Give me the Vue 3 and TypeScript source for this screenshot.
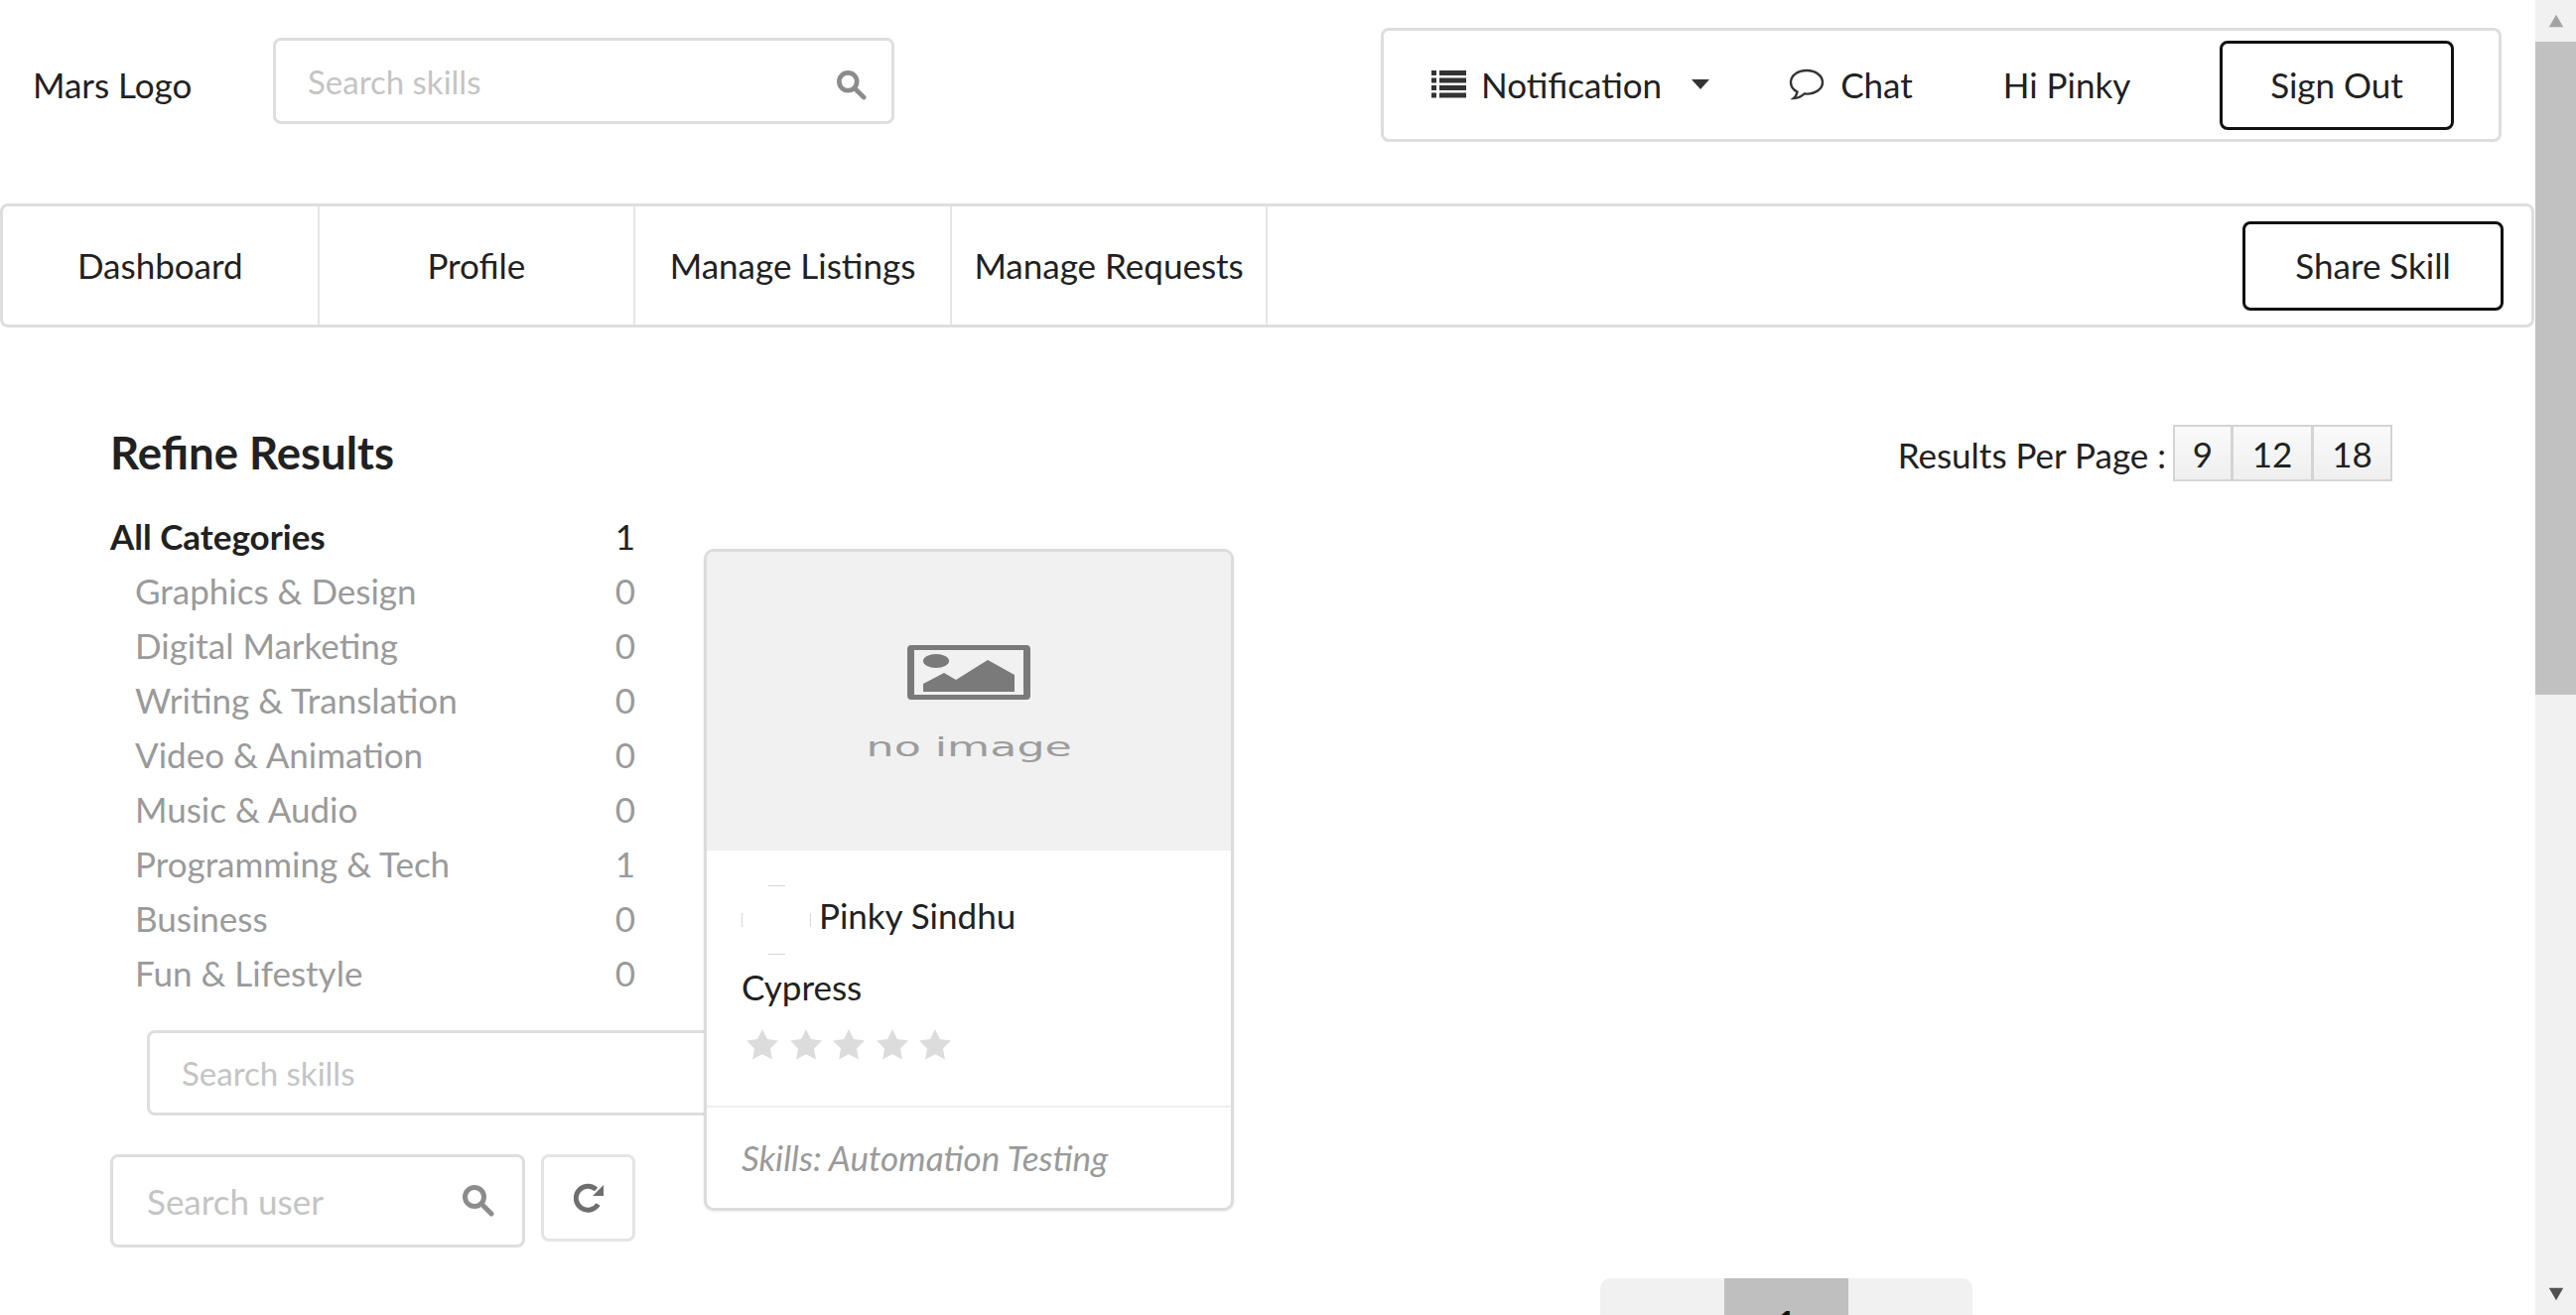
<script setup lang="ts">
interface Category {
  name: string
  count: number
}

const navItems = ['Dashboard', 'Profile', 'Manage Listings', 'Manage Requests']
const pageSizes = [9, 12, 18]
const categories: Category[] = [
  { name: 'Graphics & Design', count: 0 },
  { name: 'Digital Marketing', count: 0 },
  { name: 'Writing & Translation', count: 0 },
  { name: 'Video & Animation', count: 0 },
  { name: 'Music & Audio', count: 0 },
  { name: 'Programming & Tech', count: 1 },
  { name: 'Business', count: 0 },
  { name: 'Fun & Lifestyle', count: 0 },
]
</script>

<template>
  <div class="page">
    <main class="main">
      <header class="top">
        <span class="logo">Mars Logo</span>
        <div class="search top-search">
          <input type="text" placeholder="Search skills">
          <svg class="search-icon" viewBox="0 0 32 32"><circle cx="12" cy="12" r="9.500" fill="none" stroke="#8c8c8c" stroke-width="5" /><path d="M20 20l9 9" stroke="#8c8c8c" stroke-width="5" stroke-linecap="round" /></svg>
        </div>
        <div class="user-menu">
          <span class="menu-item notif">
            <svg class="list-icon" viewBox="0 0 35 28"><path d="M0 0h5v5H0zM8 0h27v5H8zM0 7.500h5v5H0zM8 7.500h27v5H8zM0 15h5v5H0zM8 15h27v5H8zM0 22.500h5v5H0zM8 22.500h27v5H8z" fill="#333" /></svg>
            Notification
            <svg class="caret" viewBox="0 0 18 10"><path d="M0 0h18L9 10z" fill="#333" /></svg>
          </span>
          <span class="menu-item chat">
            <svg class="chat-icon" viewBox="0 0 36 32"><path d="M18 2C9 2 2 7 2 14c0 4 2.500 7.500 6.500 9.500C8 26 7 28.500 5 30c4 0 8-2 10.500-4.500.8.100 1.700.1 2.500.1 9 0 16-5 16-11.600S27 2 18 2z" fill="none" stroke="#333" stroke-width="2.400" /></svg>
            Chat
          </span>
          <span class="menu-item greet">Hi Pinky</span>
          <button class="black-btn sign-out">Sign Out</button>
        </div>
      </header>

      <nav class="nav">
        <a v-for="item in navItems" :key="item" class="nav-item">{{ item }}</a>
        <button class="black-btn share">Share Skill</button>
      </nav>

      <section class="content">
        <aside class="sidebar">
          <h3 class="refine">Refine Results</h3>
          <div class="cat-row cat-all"><span>All Categories</span><span class="count">1</span></div>
          <div v-for="cat in categories" :key="cat.name" class="cat-row cat-sub">
            <span>{{ cat.name }}</span><span class="count">{{ cat.count }}</span>
          </div>
          <input class="skill-filter" type="text" placeholder="Search skills">
          <div class="user-filter">
            <div class="search user-search">
              <input type="text" placeholder="Search user">
              <svg class="search-icon" viewBox="0 0 32 32"><circle cx="12" cy="12" r="9.500" fill="none" stroke="#8c8c8c" stroke-width="5" /><path d="M20 20l9 9" stroke="#8c8c8c" stroke-width="5" stroke-linecap="round" /></svg>
            </div>
            <button class="refresh">
              <svg viewBox="0 0 30 30" width="30" height="30"><path d="M24.500 21.500A12 12 0 1 1 22.500 6.500" fill="none" stroke="#6e6e6e" stroke-width="5" /><path d="M30 2v11H19z" fill="#6e6e6e" /></svg>
            </button>
          </div>
        </aside>

        <div class="results">
          <div class="per-page">
            <span class="per-label">Results Per Page :</span>
            <button v-for="size in pageSizes" :key="size" class="size-btn">{{ size }}</button>
          </div>
          <article class="card">
            <div class="thumb">
              <svg class="thumb-icon" viewBox="0 0 124 55">
                <path fill-rule="evenodd" d="M4 0h116a4 4 0 0 1 4 4v47a4 4 0 0 1-4 4H4a4 4 0 0 1-4-4V4a4 4 0 0 1 4-4zM7 5v45h110V5z" fill="#7a7a7a" />
                <ellipse cx="29" cy="16" rx="13" ry="7" fill="#7a7a7a" />
                <path d="M16 47v-8l21-11 12 7 32-20 27 15v17z" fill="#7a7a7a" />
              </svg>
              <span class="no-image">no image</span>
            </div>
            <div class="card-body">
              <div class="owner">
                <svg class="avatar" viewBox="0 0 70 70">
                  <path d="M27 .5h17M27 69.500h17M.5 28v14M69.500 28v14" stroke="#d6d6d6" stroke-width="1" fill="none" />
                </svg>
                <span class="owner-name">Pinky Sindhu</span>
              </div>
              <div class="title">Cypress</div>
              <div class="stars">
                <svg v-for="n in 5" :key="n" viewBox="0 0 32 31" class="star"><path d="M16 0l4.900 10.100 11.100 1.500-8 7.800 1.900 11-9.900-5.200-9.900 5.200 1.900-11-8-7.800 11.100-1.500z" fill="#dcdcdc" /></svg>
              </div>
            </div>
            <div class="card-foot">Skills: Automation Testing</div>
          </article>
          <div class="pager">
            <span class="pg"></span>
            <span class="pg pg-active">1</span>
            <span class="pg"></span>
          </div>
        </div>
      </section>
    </main>

    <div class="scrollbar">
      <div class="arrow-box"><svg viewBox="0 0 20 20" width="18" height="18"><path d="M10 3l8 14H2z" fill="#a3a3a3" /></svg></div>
      <div class="track"><div class="thumb-bar"></div></div>
      <div class="arrow-box"><svg viewBox="0 0 20 20" width="18" height="18"><path d="M2 3h16l-8 14z" fill="#505050" /></svg></div>
    </div>
  </div>
</template>

<style scoped>
.page {
  display: flex;
  height: 100vh;
  overflow: hidden;
  font-family: Lato, "Open Sans", sans-serif;
  font-size: 35px;
  color: #212121;
  background: #fff;
}

.main {
  flex: 1;
  min-width: 0;
  overflow: hidden;
}

.top {
  display: flex;
  align-items: flex-start;
  height: 205px;
  padding: 28px 34px 0 33px;
  box-sizing: border-box;
}

.logo {
  width: 242px;
  line-height: 115px;
  flex-shrink: 0;
}

.search {
  display: flex;
  align-items: center;
  border: 3px solid #dedede;
  border-radius: 8px;
  box-sizing: border-box;
}

.search input {
  flex: 1;
  min-width: 0;
  border: 0;
  outline: 0;
  padding: 0;
  background: none;
  font: inherit;
}

input::placeholder {
  color: #c4c4c4;
  opacity: 1;
}

.top-search {
  width: 626px;
  height: 87px;
  margin-top: 10px;
  padding: 0 25px 0 32px;
}

.top-search input {
  font-size: 33px;
}

.top-search .search-icon {
  width: 30px;
  height: 30px;
  margin-top: 8px;
}

.search-icon {
  width: 32px;
  height: 32px;
}

.user-menu {
  display: flex;
  align-items: center;
  width: 1129px;
  height: 115px;
  margin-left: auto;
  padding: 0 45px 0 48px;
  border: 3px solid #dedede;
  border-radius: 8px;
  box-sizing: border-box;
}

.menu-item {
  display: inline-flex;
  align-items: center;
  padding-bottom: 2px;
  white-space: nowrap;
}

.list-icon {
  width: 35px;
  height: 28px;
  margin-right: 15px;
}

.caret {
  width: 18px;
  height: 10px;
  margin-left: 30px;
}

.chat {
  margin-left: 80px;
}

.chat-icon {
  width: 36px;
  height: 32px;
  margin-right: 16px;
}

.greet {
  margin-left: 91px;
}

.black-btn {
  font: inherit;
  color: #212121;
  background: #fff;
  border: 3px solid #111;
  border-radius: 8px;
  box-sizing: border-box;
  padding: 0 0 2px;
}

.sign-out {
  width: 236px;
  height: 90px;
  margin-left: auto;
}

.nav {
  display: flex;
  align-items: center;
  height: 125px;
  margin-right: 1px;
  border: 3px solid #dedede;
  border-radius: 8px;
  box-sizing: border-box;
}

.nav-item {
  display: flex;
  align-items: center;
  justify-content: center;
  width: 318.600px;
  height: 100%;
  padding-bottom: 2px;
  border-right: 2px solid #e6e6e6;
  box-sizing: border-box;
  white-space: nowrap;
}

.share {
  width: 263px;
  height: 90px;
  margin-left: auto;
  margin-right: 28px;
}

.content {
  display: flex;
  padding: 98px 0 0 111px;
}

.sidebar {
  width: 529px;
  flex-shrink: 0;
}

.refine {
  margin: 0 0 29px;
  font-size: 45.500px;
  font-weight: 700;
  line-height: 56px;
}

.cat-row {
  display: flex;
  justify-content: space-between;
  height: 55px;
  line-height: 55px;
}

.cat-all {
  font-weight: 700;
}

.cat-all .count {
  font-weight: 400;
}

.cat-sub {
  padding-left: 25px;
  color: #9a9a9a;
}

.skill-filter {
  display: block;
  width: 1000px;
  height: 86px;
  margin: 30px 0 39px 37px;
  padding: 0 32px;
  border: 3px solid #dedede;
  border-radius: 8px;
  box-sizing: border-box;
  outline: 0;
  font: inherit;
  font-size: 33px;
}

.user-filter {
  display: flex;
  align-items: flex-start;
  justify-content: space-between;
}

.user-search {
  width: 418px;
  height: 94px;
  padding: 0 28px 0 34px;
}

.refresh {
  display: flex;
  align-items: center;
  justify-content: center;
  width: 95px;
  height: 88px;
  padding: 0;
  background: #fff;
  border: 3px solid #e4e4e4;
  border-radius: 8px;
  box-sizing: border-box;
}

.results {
  flex: 1;
  min-width: 0;
  padding-left: 69px;
}

.per-page {
  display: flex;
  align-items: center;
  justify-content: flex-end;
  height: 57px;
  margin-right: 144px;
  margin-bottom: 68px;
}

.per-label {
  margin-right: 8px;
  padding-top: 2px;
}

.size-btn {
  height: 57px;
  width: 60px;
  padding: 0;
  font: inherit;
  color: #212121;
  background: linear-gradient(#fafafa, #efefef);
  border: 2px solid #d4d4d4;
  margin-left: -1px;
}

.size-btn:nth-of-type(2) {
  width: 82px;
}

.size-btn:nth-of-type(3) {
  width: 81px;
}

.card {
  position: relative;
  width: 534px;
  background: #fff;
  border: 3px solid #dcdcdc;
  border-radius: 10px;
  box-sizing: border-box;
  box-shadow: 0 1px 3px rgba(0, 0, 0, 0.08);
  overflow: hidden;
}

.thumb {
  display: flex;
  flex-direction: column;
  align-items: center;
  height: 301px;
  background: #f1f1f1;
}

.thumb-icon {
  flex-shrink: 0;
  width: 124px;
  height: 55px;
  margin-top: 94px;
}

.no-image {
  margin-top: 33px;
  font-family: "DejaVu Sans", sans-serif;
  font-size: 27px;
  line-height: 30px;
  color: #9c9c9c;
  transform: scaleX(1.64);
}

.card-body {
  height: 259px;
  padding: 35px 35px 0;
  box-sizing: border-box;
  border-bottom: 2px solid #eee;
}

.owner {
  display: flex;
  align-items: center;
  height: 70px;
}

.owner-name {
  padding-bottom: 10px;
}

.avatar {
  width: 70px;
  height: 70px;
  margin-right: 8px;
}

.title {
  margin-top: 7px;
  line-height: 50px;
}

.stars {
  display: flex;
  gap: 11.600px;
  margin-top: 18px;
  padding-left: 5px;
}

.star {
  width: 32px;
  height: 31px;
}

.card-foot {
  height: 101px;
  padding: 0 35px;
  line-height: 101px;
  font-style: italic;
  color: #9a9a9a;
}

.pager {
  display: flex;
  width: 375px;
  margin: 68px 0 0 903px;
  border-radius: 10px;
  overflow: hidden;
}

.pg {
  width: 125px;
  height: 92px;
  background: #f1f1f1;
  text-align: center;
  color: #111;
  font-weight: 700;
  line-height: 88px;
}

.pg-active {
  background: #bfbfbf;
}

.scrollbar {
  display: flex;
  flex-direction: column;
  width: 41px;
  flex-shrink: 0;
  background: #f1f1f1;
}

.arrow-box {
  display: flex;
  align-items: center;
  justify-content: center;
  height: 42px;
  flex-shrink: 0;
}

.track {
  flex: 1;
}

.thumb-bar {
  height: 658px;
  background: #c1c1c1;
}
</style>

<style>
body {
  overflow: hidden;
}
</style>
